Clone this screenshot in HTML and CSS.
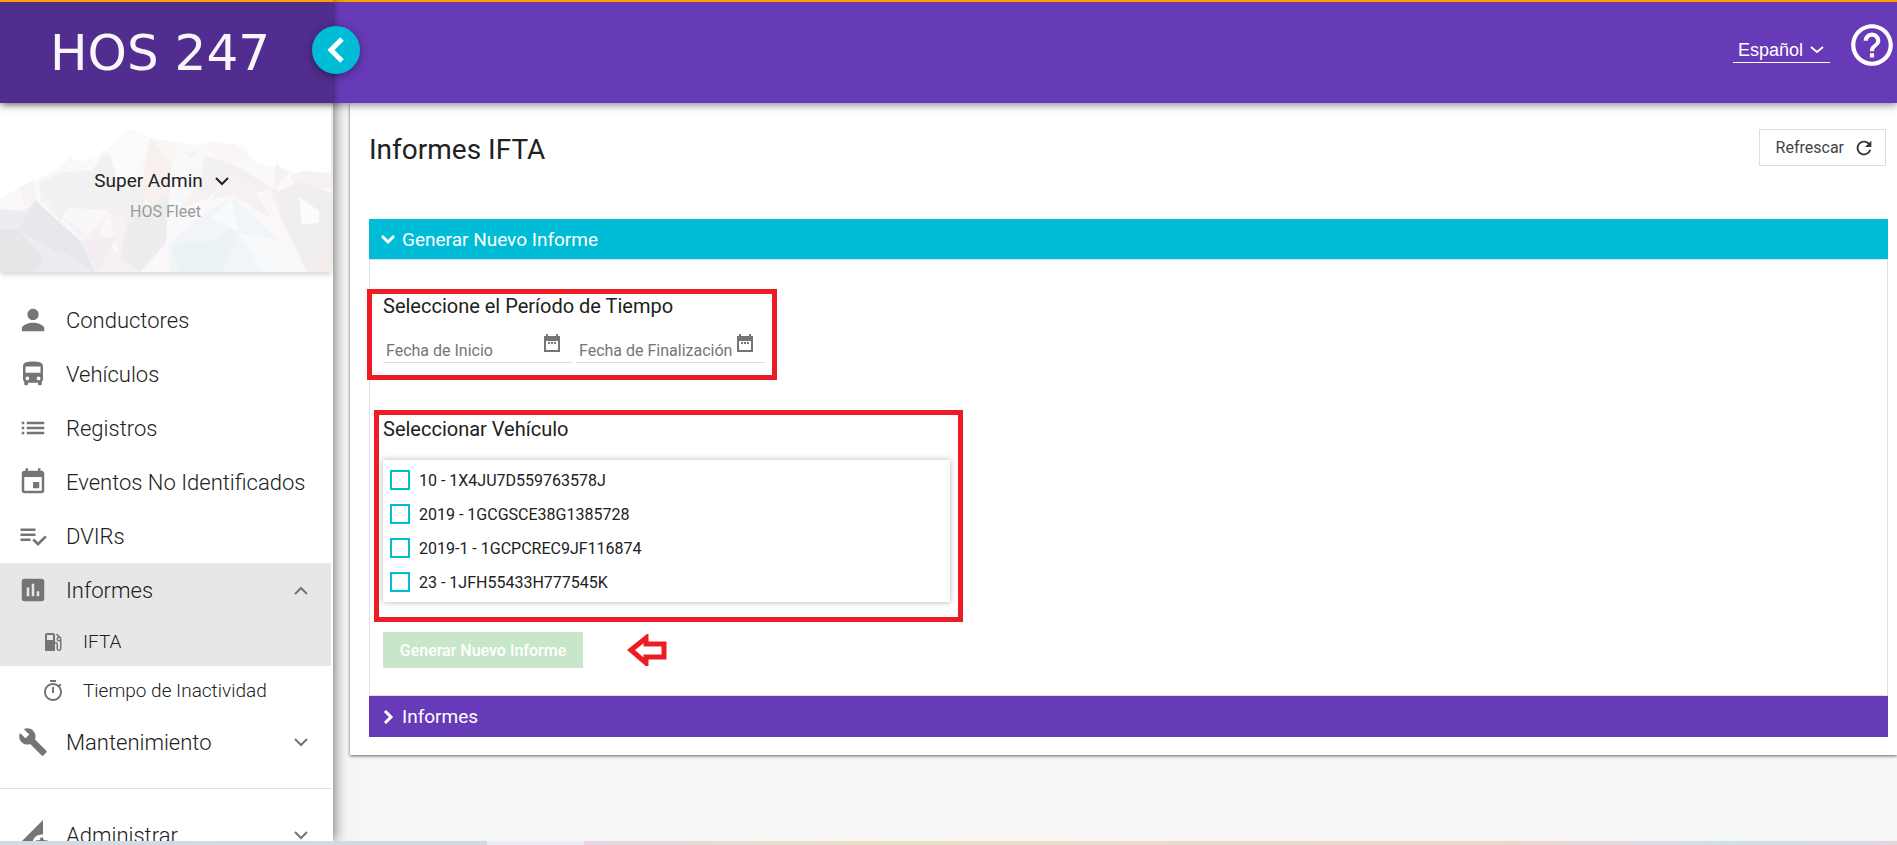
FILE: index.html
```html
<!DOCTYPE html>
<html lang="es">
<head>
    <meta charset="UTF-8">
    <meta name="viewport" content="width=device-width, initial-scale=1.0">
    <title>Informes IFTA</title>
    <link rel="stylesheet" href="styles.css">
</head>
<body>

    <header class="topbar">
        <div class="brand">
            <a href="#" class="logo">HOS 247</a>
            <button type="button" class="collapse" aria-label="Contraer menú">
                <svg width="48" height="48" viewBox="0 0 48 48"><path d="M30 13L19 24l11 11" fill="none" stroke="#fff" stroke-width="5"/></svg>
            </button>
        </div>
        <div class="tools">
            <div class="lang">
                <select aria-label="Idioma">
                    <option>Español</option>
                    <option>English</option>
                </select>
                <svg width="14" height="8" viewBox="0 0 14 8"><path d="M1 1l6 5 6-5" fill="none" stroke="#fff" stroke-width="2"/></svg>
            </div>
            <button type="button" class="help" aria-label="Ayuda">
                <svg width="50" height="50" viewBox="0 0 24 24"><path d="M11 18h2v-2h-2v2zm1-16C6.480 2 2 6.480 2 12s4.480 10 10 10 10-4.480 10-10S17.520 2 12 2zm0 18c-4.410 0-8-3.590-8-8s3.590-8 8-8 8 3.590 8 8-3.590 8-8 8zm0-14c-2.210 0-4 1.790-4 4h2c0-1.100.9-2 2-2s2 .9 2 2c0 2-3 1.750-3 5h2c0-2.250 3-2.500 3-5 0-2.210-1.790-4-4-4z"/></svg>
            </button>
        </div>
    </header>

    <div class="content">

        <aside class="sidebar">
            <div class="profile">
                <svg class="mountains" viewBox="0 0 331 169" preserveAspectRatio="none">
                    <path fill="#faf8f8" d="M0 96l20-12 13-6 22-10 16-14 9 5 17-4 5-8h6l20-21 22 9 14 4 8 0 16 2 12 0 16-3 20 6 6-2 14 18 34 7 10 8 31 2v98H0z"/>
                    <path fill="#f8f3f3" d="M20 84l14-6 4 22-14 2zM40 80l22 14-4 20-18-16z"/>
                    <path fill="#f1f1f2" d="M38 80l24-11 30-1 10-16 8 1 30 33 16 44-56-2-30-16-10 6z"/>
                    <path fill="#fdfafa" d="M110 50l18-22 22 8-16 38-16 10z"/>
                    <path fill="#f7f0ef" d="M150 35l22 26-4 54-30-24 8-30z"/>
                    <path fill="#fbf6f5" d="M150 35l24 4 4 14-6 8zM204 50l28 12-12 16z"/>
                    <path fill="#f4f4f6" d="M178 44l12 6 12-6-12 12z"/>
                    <path fill="#f6f9fb" d="M200 55l2 18-22 32-10 0 12-34z"/>
                    <path fill="#f8f1ef" d="M204 56l30 10-26 30-28 10 22-32z"/>
                    <path fill="#f2f0f0" d="M204 52l30 10 14 8 28 18-20 8-30-18-26 20z"/>
                    <path fill="#fbf6f6" d="M205 46l8-6 20 5 2 18zM228 42l8-2 12 16-8 6z"/>
                    <path fill="#f6f1f1" d="M230 68l32 20 14-2 24 36-8 6-60-36-20 4z"/>
                    <path fill="#fbf7f6" d="M256 90l14-4 16 42 22 41-16-12-16-34z"/>
                    <path fill="#f6f2f2" d="M276 60l12 10-14 18zM290 72l14-4 27 2v16l-36-4z"/>
                    <path fill="#f0eeef" d="M276 90l24-12 31 12v79h-24l-26-55z"/>
                    <path fill="#fdfbfb" d="M299 94l20 14v12l-17 2z"/>
                    <path fill="#f5ecec" d="M319 150l12-16v35h-20z"/>
                    <path fill="#ecedf0" d="M0 106l24 2 12-10 46 41 14 30H0z"/>
                    <path fill="#e7e8ec" d="M36 98l36 34-14 18-40-24zM60 122l20 16 14 31-34-22z"/>
                    <path fill="#e7e7e9" d="M0 126l18 0 26 30-10 13H0z"/>
                    <path fill="#f6f1f5" d="M60 112l10-7 64 8 32 14-26 42H96l-14-32z"/>
                    <path fill="#faf7fa" d="M70 105l40 2-22 26-26-20zM108 110l12 44-20-24z"/>
                    <path fill="#f3edf1" d="M128 112l36 14-44 28zM82 138l34-4-18 35z"/>
                    <path fill="#ededef" d="M134 110l34-16-2 46-26 29-20-14z"/>
                    <path fill="#f1f5f8" d="M168 142l36-32 28-16 44 40 31 35H170z"/>
                    <path fill="#f7f9fb" d="M232 94l6 34-28-12zM238 130l48 8 21 31h-44z"/>
                    <path fill="#ebf2f6" d="M170 142l42-4 20-12 6 6-18 37h-40zM190 169l24-30 10 30z"/>
                </svg>
                <button type="button" class="user">Super Admin
                    <svg width="14" height="9" viewBox="0 0 14 9"><path d="M1 1l6 6 6-6" fill="none" stroke="#222" stroke-width="2"/></svg>
                </button>
                <div class="fleet">HOS Fleet</div>
            </div>

            <nav class="menu">
                <a href="#" class="item">
                    <svg viewBox="0 0 24 24"><path transform="translate(-1.400 -1.400) scale(1.120)" d="M12 12c2.210 0 4-1.790 4-4s-1.790-4-4-4-4 1.790-4 4 1.790 4 4 4zm0 2c-2.670 0-8 1.340-8 4v2h16v-2c0-2.660-5.330-4-8-4z"/></svg>
                    Conductores
                </a>
                <a href="#" class="item">
                    <svg viewBox="0 0 24 24"><path d="M4 16c0 .88.39 1.670 1 2.220V20c0 .55.45 1 1 1h1c.55 0 1-.45 1-1v-1h8v1c0 .55.45 1 1 1h1c.55 0 1-.45 1-1v-1.780c.61-.55 1-1.340 1-2.220V6c0-3.500-3.580-4-8-4s-8 .5-8 4v10zm3.500 1c-.83 0-1.500-.67-1.500-1.500S6.670 14 7.500 14s1.500.67 1.500 1.500S8.330 17 7.500 17zm9 0c-.83 0-1.500-.67-1.500-1.500s.67-1.500 1.500-1.500 1.500.67 1.500 1.500-.67 1.500-1.500 1.500zm1.500-6H6V6h12v5z"/></svg>
                    Vehículos
                </a>
                <a href="#" class="item">
                    <svg viewBox="0 0 24 24"><path d="M3 13h2v-2H3v2zm0 4h2v-2H3v2zm0-8h2V7H3v2zm4 4h14v-2H7v2zm0 4h14v-2H7v2zM7 7v2h14V7H7z"/></svg>
                    Registros
                </a>
                <a href="#" class="item">
                    <svg viewBox="0 0 24 24"><path d="M17 12h-5v5h5v-5zM16 1v2H8V1H6v2H5c-1.110 0-2 .9-2 2v14c0 1.100.89 2 2 2h14c1.100 0 2-.9 2-2V5c0-1.100-.9-2-2-2h-1V1h-2zm3 18H5V8h14v11z"/></svg>
                    Eventos No Identificados
                </a>
                <a href="#" class="item">
                    <svg viewBox="0 0 24 24"><path d="M14 10H2v2h12v-2zm0-4H2v2h12V6zM2 16h8v-2H2v2zm19.500-4.500L23 13l-6.990 7-4.510-4.500L13 14l3.010 3 5.490-5.500z"/></svg>
                    DVIRs
                </a>
                <a href="#" class="item active">
                    <svg viewBox="0 0 24 24"><path d="M19 3H5c-1.100 0-2 .9-2 2v14c0 1.100.9 2 2 2h14c1.100 0 2-.9 2-2V5c0-1.100-.9-2-2-2zM9 17H7v-7h2v7zm4 0h-2V7h2v10zm4 0h-2v-4h2v4z"/></svg>
                    Informes
                    <svg class="arrow" viewBox="0 0 14 9"><path d="M1 8l6-6 6 6"/></svg>
                </a>
                <a href="#" class="item sub active">
                    <svg viewBox="0 0 24 24"><path d="M19.770 7.230l.01-.01-3.720-3.720L15 4.560l2.110 2.110c-.94.36-1.610 1.260-1.610 2.330 0 1.380 1.120 2.500 2.500 2.500.36 0 .69-.08 1-.21v7.210c0 .55-.45 1-1 1s-1-.45-1-1V14c0-1.100-.9-2-2-2h-1V5c0-1.100-.9-2-2-2H6c-1.100 0-2 .9-2 2v16h10v-7.500h1.500v5c0 1.380 1.120 2.500 2.500 2.500s2.500-1.120 2.500-2.500V9c0-.69-.28-1.320-.73-1.770zM12 10H6V5h6v5zm6 0c-.55 0-1-.45-1-1s.45-1 1-1 1 .45 1 1-.45 1-1 1z"/></svg>
                    IFTA
                </a>
                <a href="#" class="item sub">
                    <svg viewBox="0 0 24 24"><path d="M15 1H9v2h6V1zm-4 13h2V8h-2v6zm8.030-6.610l1.420-1.420c-.43-.51-.9-.99-1.410-1.410l-1.420 1.420C16.070 4.740 14.120 4 12 4c-4.970 0-9 4.030-9 9s4.020 9 9 9 9-4.030 9-9c0-2.120-.74-4.070-1.970-5.610zM12 20c-3.870 0-7-3.130-7-7s3.130-7 7-7 7 3.130 7 7-3.130 7-7 7z"/></svg>
                    Tiempo de Inactividad
                </a>
                <a href="#" class="item">
                    <svg viewBox="0 0 24 24"><path d="M22.700 19l-9.100-9.100c.9-2.300.4-5-1.500-6.900-2-2-5-2.400-7.400-1.300L9 6 6 9 1.600 4.700C.4 7.100.9 10.100 2.900 12.100c1.900 1.900 4.600 2.400 6.900 1.500l9.100 9.100c.4.4 1 .4 1.400 0l2.300-2.300c.5-.4.5-1.100.1-1.400z"/></svg>
                    Mantenimiento
                    <svg class="arrow" viewBox="0 0 14 9"><path d="M1 1l6 6 6-6"/></svg>
                </a>
                <hr>
                <a href="#" class="item">
                    <svg viewBox="0 0 24 24"><path d="M18.990 11.500c.34 0 .67.03 1 .07L20 0 0 20h11.560c-.04-.33-.07-.66-.07-1 0-4.140 3.360-7.500 7.500-7.500zM18 14h2l.3 1.600 1.500.8 1.400-.5 1 1.700-1.200 1.200v2H15v-2l-1.200-1.200 1-1.700 1.400.5 1.500-.8z"/></svg>
                    Administrar
                    <svg class="arrow" viewBox="0 0 14 9"><path d="M1 1l6 6 6-6"/></svg>
                </a>
            </nav>
        </aside>

        <main class="card">
            <div class="head">
                <h1>Informes IFTA</h1>
                <button type="button" class="refresh">Refrescar
                    <svg width="22" height="22" viewBox="0 0 24 24"><path d="M17.650 6.350C16.200 4.900 14.210 4 12 4c-4.420 0-7.990 3.580-7.990 8s3.570 8 7.990 8c3.730 0 6.840-2.550 7.730-6h-2.080c-.82 2.330-3.040 4-5.650 4-3.310 0-6-2.690-6-6s2.690-6 6-6c1.660 0 3.140.69 4.220 1.780L13 11h7V4l-2.350 2.350z"/></svg>
                </button>
            </div>

            <button type="button" class="bar open">
                <svg width="14" height="14" viewBox="0 0 14 14"><path d="M1 4l6 6 6-6"/></svg>
                Generar Nuevo Informe
            </button>

            <form class="panel">
                <section class="period">
                    <h2>Seleccione el Período de Tiempo</h2>
                    <div class="dates">
                        <div class="date">
                            <input type="text" placeholder="Fecha de Inicio" aria-label="Fecha de Inicio">
                            <svg width="16" height="18" viewBox="0 0 16 18"><path fill-rule="evenodd" d="M2 0h2v2h8V0h2v2h2v16H0V2h2zM2 7v9h12V7zM4 8h2v2H4zm3 0h2v2H7zm3 0h2v2h-2z"/></svg>
                        </div>
                        <div class="date">
                            <input type="text" placeholder="Fecha de Finalización" aria-label="Fecha de Finalización">
                            <svg width="16" height="18" viewBox="0 0 16 18"><path fill-rule="evenodd" d="M2 0h2v2h8V0h2v2h2v16H0V2h2zM2 7v9h12V7zM4 8h2v2H4zm3 0h2v2H7zm3 0h2v2h-2z"/></svg>
                        </div>
                    </div>
                </section>

                <section class="vehicles">
                    <h2>Seleccionar Vehículo</h2>
                    <div class="list">
                        <label><input type="checkbox">10 - 1X4JU7D559763578J</label>
                        <label><input type="checkbox">2019 - 1GCGSCE38G1385728</label>
                        <label><input type="checkbox">2019-1 - 1GCPCREC9JF116874</label>
                        <label><input type="checkbox">23 - 1JFH55433H777545K</label>
                    </div>
                </section>

                <div class="actions">
                    <button type="submit" class="generate" disabled>Generar Nuevo Informe</button>
                    <svg width="40" height="32" viewBox="0 0 40 32"><path d="M4 16L19 4v6h18v13H19v6z" fill="#fff" stroke="#ed1c24" stroke-width="5"/></svg>
                </div>
            </form>

            <button type="button" class="bar">
                <svg width="14" height="14" viewBox="0 0 14 14"><path d="M4 1l6 6-6 6"/></svg>
                Informes
            </button>
        </main>

    </div>

    <div class="strip"></div>

</body>
</html>
```

FILE: styles.css
```css
*,
*::before,
*::after {
    box-sizing: border-box;
}

body {
    margin: 0;
    height: 100vh;
    display: flex;
    flex-direction: column;
    overflow: hidden;
    border-top: 2px solid #ffa000;
    background: #f6f6f6;
    color: #212121;
    font-family: Roboto, "Liberation Sans", sans-serif;
}

button {
    border: 0;
    padding: 0;
    background: none;
    font-family: inherit;
    cursor: pointer;
}

a {
    color: inherit;
    text-decoration: none;
}

h1, h2 {
    margin: 0;
    font-weight: 400;
}

/* header */

.topbar {
    position: relative;
    z-index: 3;
    flex: none;
    display: flex;
    justify-content: space-between;
    height: 101px;
    background: #673ab7;
    box-shadow: 0 2px 8px rgba(0, 0, 0, .45);
}

.brand {
    position: relative;
    display: flex;
    align-items: center;
    width: 333px;
    padding-left: 50px;
    background: #512d8f;
    box-shadow: 2px 0 6px rgba(0, 0, 0, .35);
}

.logo {
    color: #f8f6fb;
    font-family: "DejaVu Sans", sans-serif;
    font-size: 50px;
}

.collapse {
    position: absolute;
    top: 24px;
    right: -27px;
    width: 48px;
    height: 48px;
    border-radius: 50%;
    background: #00bcd7;
    box-shadow: 0 2px 8px rgba(0, 0, 0, .4);
}

.tools {
    display: flex;
    align-items: flex-start;
    gap: 17px;
}

.lang {
    display: flex;
    align-items: center;
    width: 97px;
    height: 27px;
    margin-top: 34px;
    padding: 2px 0 0 5px;
    border-bottom: 1px solid #fff;
}

.lang select {
    appearance: none;
    width: 72px;
    border: 0;
    padding: 0;
    background: none;
    color: #fff;
    font-family: "Liberation Sans", Arial, sans-serif;
    font-size: 18px;
}

.help {
    height: 50px;
    margin-top: 18px;
    fill: #fff;
}

.help svg {
    display: block;
}

.content {
    flex: 1;
    min-height: 0;
    display: flex;
    align-items: flex-start;
    gap: 17px;
}

/* sidebar */

.sidebar {
    position: relative;
    z-index: 2;
    flex: none;
    align-self: stretch;
    width: 333px;
    padding-right: 2px;
    overflow: hidden;
    background: #fff;
}

.content::before {
    content: "";
    position: absolute;
    top: 0;
    bottom: 4px;
    left: 0;
    width: 333px;
    z-index: 1;
    box-shadow: 2px 0 12px rgba(0, 0, 0, .5);
}

.profile {
    position: relative;
    height: 169px;
    padding-top: 65px;
    box-shadow: 0 2px 6px rgba(0, 0, 0, .2);
    text-align: center;
}

.mountains {
    position: absolute;
    top: 0;
    left: 0;
    width: 100%;
    height: 100%;
}

.user {
    position: relative;
    display: flex;
    align-items: center;
    justify-content: center;
    gap: 12px;
    width: 100%;
    padding-right: 8px;
    color: #222;
    font-size: 19px;
    line-height: 26px;
}

.fleet {
    position: relative;
    margin-top: 6px;
    color: #999;
    font-size: 16px;
    line-height: 24px;
}

.menu {
    padding-top: 21px;
}

.item {
    display: flex;
    align-items: center;
    gap: 18px;
    height: 54px;
    padding: 0 23px 0 18px;
    font-size: 22px;
    font-weight: 300;
}

.item svg {
    width: 30px;
    height: 30px;
    fill: #757575;
}

.item.active {
    background: #e7e7e7;
}

.item.sub {
    height: 49px;
    padding-left: 41px;
    font-size: 19px;
}

.item.sub svg {
    width: 24px;
    height: 24px;
}

.item .arrow {
    width: 14px;
    height: 9px;
    margin-left: auto;
    fill: none;
    stroke: #757575;
    stroke-width: 2;
}

.menu hr {
    margin: 19px 0;
    border: 0;
    border-top: 1px solid #e0e0e0;
}

/* report card */

.card {
    flex: 1;
    padding: 0 9px 18px 19px;
    background: #fff;
    box-shadow: 0 1px 3px rgba(0, 0, 0, .6);
}

.head {
    display: flex;
    align-items: flex-start;
    justify-content: space-between;
    height: 116px;
    padding: 26px 2px 0 0;
}

.head h1 {
    font-size: 28px;
    line-height: 42px;
}

.refresh {
    display: flex;
    align-items: center;
    gap: 9px;
    height: 37px;
    padding: 0 10px 0 16px;
    border: 1px solid #ddd;
    color: #444;
    font-size: 16px;
}

.refresh svg {
    fill: #333;
}

.bar {
    display: flex;
    align-items: center;
    gap: 7px;
    width: 100%;
    height: 41px;
    padding: 0 12px;
    background: #673ab7;
    color: #fff;
    font-size: 19px;
}

.bar.open {
    height: 40px;
    background: #00bcd7;
}

.bar path {
    fill: none;
    stroke: #fff;
    stroke-width: 3;
}

.panel {
    padding: 34px 13px 27px;
    border: 1px solid #e0e0e0;
}

.panel h2 {
    font-size: 20px;
    line-height: 24px;
}

/* red frames over the steps of the guide */
.period,
.vehicles {
    position: relative;
}

.period::after,
.vehicles::after {
    content: "";
    position: absolute;
    border: 5px solid #ed1c24;
    pointer-events: none;
}

.period::after {
    top: -5px;
    left: -16px;
    width: 410px;
    height: 91px;
}

.vehicles::after {
    top: -7px;
    left: -9px;
    width: 589px;
    height: 212px;
}

.dates {
    display: flex;
    gap: 4px;
    margin-top: 10px;
}

.date {
    display: flex;
    align-items: flex-start;
    width: 189px;
    height: 35px;
    padding: 6px 12px 0 3px;
    border-bottom: 1px solid #ddd;
}

.date input {
    flex: 1;
    min-width: 0;
    height: 28px;
    padding: 5px 0 0;
    border: 0;
    background: none;
    font-family: inherit;
    font-size: 16px;
}

.date input::placeholder {
    color: #757575;
}

.date svg {
    flex: none;
    fill: #757575;
}

.vehicles {
    margin-top: 54px;
}

.list {
    width: 567px;
    margin-top: 19px;
    padding: 3px 7px;
    box-shadow: 0 0 6px rgba(0, 0, 0, .3);
}

.list label {
    display: flex;
    align-items: center;
    gap: 9px;
    height: 34px;
    font-size: 16px;
}

.list input {
    appearance: none;
    width: 20px;
    height: 20px;
    margin: 0;
    border: 2px solid #00bcd7;
    background: #fff;
}

.actions {
    display: flex;
    align-items: center;
    gap: 44px;
    margin-top: 30px;
}

.generate {
    width: 200px;
    height: 36px;
    background: #c8e6c9;
    color: #fff;
    font-size: 16px;
    font-weight: 500;
}

.strip {
    position: relative;
    z-index: 4;
    flex: none;
    height: 4px;
    background: linear-gradient(90deg, #d3dae4 0, #d0dae2 487px, #efedf4 487px, #efedf4 584px, #e6d5e4 584px, #eadfc6 45%, #e8d8cc 80%, #e4d7e0 85%, #cfe0e2 91%, #d8d9e6 96%, #e0d6de 100%);
}
```
